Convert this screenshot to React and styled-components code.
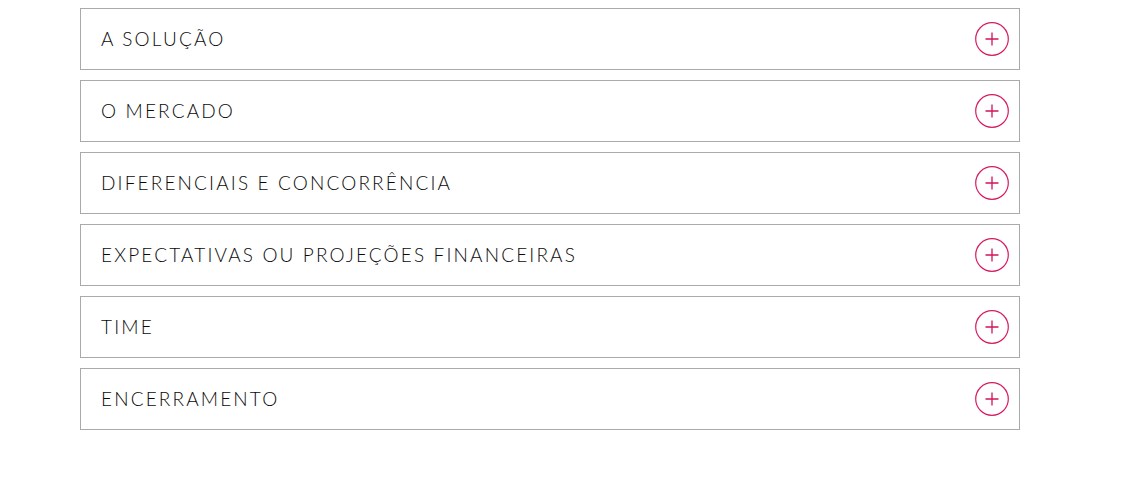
import React from "react";
import styled, { createGlobalStyle } from "styled-components";

const Global = createGlobalStyle`
  html, body { margin: 0; padding: 0; background: #fff; }
  body { font-family: "Lato", "Liberation Sans", sans-serif; }
`;

const List = styled.div`
  display: flex;
  flex-direction: column;
  gap: 10px;
  width: 940px;
  padding: 8px 0 0 80px;
`;

const Item = styled.div`
  box-sizing: border-box;
  height: 62px;
  border: 1px solid #aaaaaa;
  display: flex;
  align-items: center;
  justify-content: space-between;
  padding: 0 10px 0 20px;
`;

const Title = styled.span`
  font-family: "Lato", "Liberation Sans", sans-serif;
  font-weight: 300;
  font-size: 19px;
  line-height: 22px;
  letter-spacing: 2.15px;
  color: #0a0a0a;
  text-transform: uppercase;
  padding-bottom: 1px;
`;

const Toggle = styled.span`
  width: 34px;
  height: 34px;
  display: flex;
`;

const PlusIcon = () => (
  <svg width="34" height="34" viewBox="0 0 34 34" fill="none">
    <circle cx="17" cy="17" r="16.3" stroke="#d81b60" strokeWidth="1.2" />
    <path d="M10.5 17h13M17 10.5v13" stroke="#d1125a" strokeWidth="1.3" />
  </svg>
);

const items = [
  "A SOLUÇÃO",
  "O MERCADO",
  "DIFERENCIAIS E CONCORRÊNCIA",
  "EXPECTATIVAS OU PROJEÇÕES FINANCEIRAS",
  "TIME",
  "ENCERRAMENTO",
];

export default function App() {
  return (
    <>
      <Global />
      <List>
        {items.map((t) => (
          <Item key={t}>
            <Title>{t}</Title>
            <Toggle>
              <PlusIcon />
            </Toggle>
          </Item>
        ))}
      </List>
    </>
  );
}
